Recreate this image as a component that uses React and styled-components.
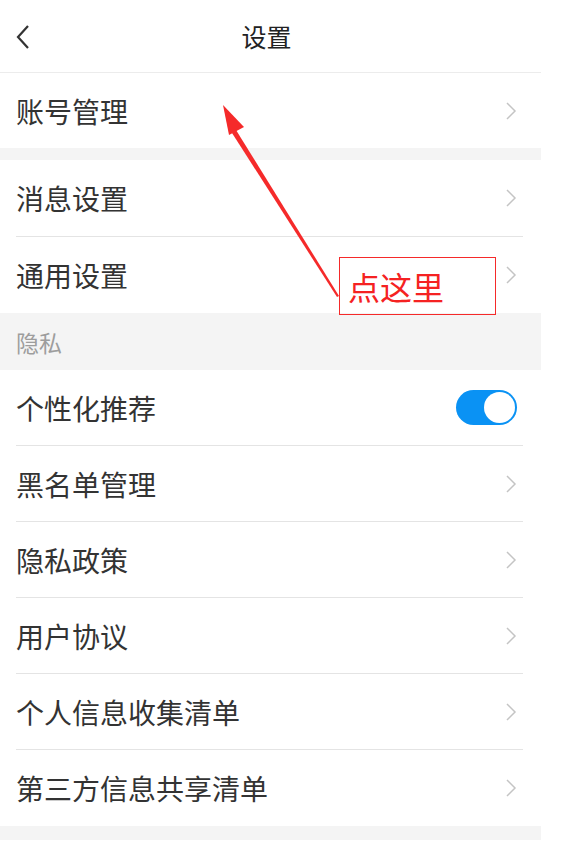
import styled, { createGlobalStyle } from "styled-components";

const GlobalStyle = createGlobalStyle`
  * { box-sizing: border-box; }
  html, body { margin: 0; padding: 0; background: #fff; }
  body {
    font-family: "Noto Sans CJK SC", "Noto Sans", sans-serif;
    color: #333;
  }
`;

const Page = styled.div`
  position: relative;
  width: 580px;
  height: 855px;
  overflow: hidden;
  background: #fff;
`;

const Screen = styled.div`
  width: 541px;
  display: flex;
  flex-direction: column;
`;

const Header = styled.header`
  position: relative;
  height: 73px;
  display: flex;
  align-items: center;
  justify-content: center;
  border-bottom: 1px solid #ececec;
`;

const BackButton = styled.button`
  position: absolute;
  left: 10px;
  top: 22px;
  width: 26px;
  height: 30px;
  padding: 0;
  border: none;
  background: none;
  display: flex;
  align-items: center;
  justify-content: center;
`;

const Title = styled.h1`
  margin: 0 0 0 -8px;
  font-size: 25px;
  font-weight: 400;
  color: #222;
  line-height: 1;
`;

const Gap = styled.div`
  height: ${(p) => p.$h}px;
  background: #f4f4f4;
`;

const SectionTitle = styled.div`
  height: 57px;
  background: #f4f4f4;
  padding-left: 16px;
  display: flex;
  align-items: center;
  font-size: 23px;
  color: #9d9d9d;
`;

const Row = styled.div`
  height: ${(p) => p.$h || 76}px;
  margin-left: 16px;
  margin-right: 18px;
  padding-right: 6px;
  display: flex;
  align-items: center;
  justify-content: space-between;
  border-bottom: ${(p) => (p.$last ? "none" : "1px solid #e4e4e4")};
`;

const Label = styled.span`
  font-size: 28px;
  color: #333;
  line-height: 1;
`;

const Toggle = styled.div`
  width: 61px;
  height: 35px;
  border-radius: 18px;
  background: #0a92f4;
  display: flex;
  align-items: center;
  justify-content: flex-end;
  padding-right: 2px;
`;

const Knob = styled.div`
  width: 31px;
  height: 31px;
  border-radius: 50%;
  background: #fff;
`;

const Callout = styled.div`
  position: absolute;
  left: 339px;
  top: 257px;
  width: 157px;
  height: 58px;
  border: 1.5px solid #f52a2a;
  padding-left: 8px;
  display: flex;
  align-items: center;
  font-size: 32px;
  color: #f52222;
`;

const Overlay = styled.svg`
  position: absolute;
  left: 0;
  top: 0;
  pointer-events: none;
`;

function Chevron() {
  return (
    <svg width="12" height="20" viewBox="0 0 12 20">
      <path d="M2 2 L10 10 L2 18" fill="none" stroke="#c4c4c4" strokeWidth="1.5" />
    </svg>
  );
}

function BackIcon() {
  return (
    <svg width="18" height="26" viewBox="0 0 18 26">
      <path d="M14 2 L4 13 L14 24" fill="none" stroke="#333" strokeWidth="2.2" />
    </svg>
  );
}

function LinkRow({ label, h, last }) {
  return (
    <Row $h={h} $last={last}>
      <Label>{label}</Label>
      <Chevron />
    </Row>
  );
}

const privacyItems = ["黑名单管理", "隐私政策", "用户协议", "个人信息收集清单", "第三方信息共享清单"];

function App() {
  return (
    <Page>
      <GlobalStyle />
      <Screen>
        <Header>
          <BackButton>
            <BackIcon />
          </BackButton>
          <Title>设置</Title>
        </Header>
        <LinkRow label="账号管理" h={75} last />
        <Gap $h={12} />
        <LinkRow label="消息设置" h={77} />
        <LinkRow label="通用设置" last />
        <SectionTitle>隐私</SectionTitle>
        <Row>
          <Label>个性化推荐</Label>
          <Toggle>
            <Knob />
          </Toggle>
        </Row>
        {privacyItems.map((item, i) => (
          <LinkRow key={item} label={item} last={i === privacyItems.length - 1} />
        ))}
        <Gap $h={14} />
      </Screen>

      <Callout>点这里</Callout>
      <Overlay width="580" height="855" viewBox="0 0 580 855">
        <polygon points="236,130 339,296 337,297 232,133" fill="#f52a2a" />
        <polygon points="223,105 244,127 229,135" fill="#f52a2a" />
      </Overlay>
    </Page>
  );
}

export default App;
